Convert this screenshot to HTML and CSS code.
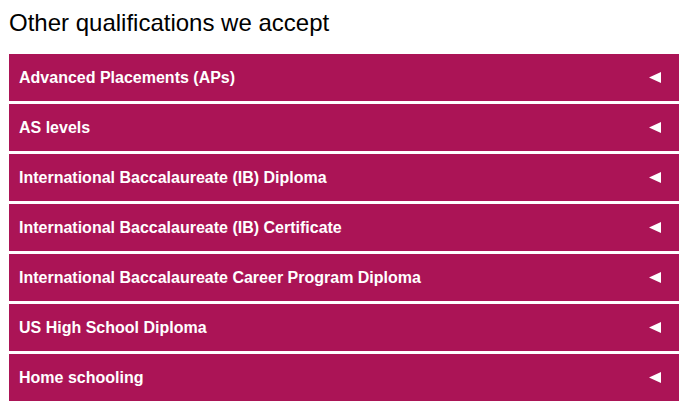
FILE: index.html
```html
<!DOCTYPE html>
<html lang="en">
<head>
<meta charset="utf-8">
<title>Other qualifications we accept</title>
<link rel="stylesheet" href="styles.css">
</head>
<body>
<main class="page">
  <h2 class="title">Other qualifications we accept</h2>
  <ul class="accordion">
    <li class="item"><span class="label">Advanced Placements (APs)</span><svg class="arrow" viewBox="0 0 12 11" width="12" height="11"><polygon points="0,5.5 12,0 12,11" fill="#fff"/></svg></li>
    <li class="item"><span class="label">AS levels</span><svg class="arrow" viewBox="0 0 12 11" width="12" height="11"><polygon points="0,5.5 12,0 12,11" fill="#fff"/></svg></li>
    <li class="item"><span class="label">International Baccalaureate (IB) Diploma</span><svg class="arrow" viewBox="0 0 12 11" width="12" height="11"><polygon points="0,5.5 12,0 12,11" fill="#fff"/></svg></li>
    <li class="item"><span class="label">International Baccalaureate (IB) Certificate</span><svg class="arrow" viewBox="0 0 12 11" width="12" height="11"><polygon points="0,5.5 12,0 12,11" fill="#fff"/></svg></li>
    <li class="item"><span class="label">International Baccalaureate Career Program Diploma</span><svg class="arrow" viewBox="0 0 12 11" width="12" height="11"><polygon points="0,5.5 12,0 12,11" fill="#fff"/></svg></li>
    <li class="item"><span class="label">US High School Diploma</span><svg class="arrow" viewBox="0 0 12 11" width="12" height="11"><polygon points="0,5.5 12,0 12,11" fill="#fff"/></svg></li>
    <li class="item"><span class="label">Home schooling</span><svg class="arrow" viewBox="0 0 12 11" width="12" height="11"><polygon points="0,5.5 12,0 12,11" fill="#fff"/></svg></li>
  </ul>
</main>
</body>
</html>
```
FILE: styles.css
```css
html, body {
  margin: 0;
  padding: 0;
  background: #ffffff;
}

body {
  font-family: "Liberation Sans", Arial, sans-serif;
}

.page {
  padding: 9px 9px 0 9px;
}

.title {
  margin: 0 0 17px 0;
  font-size: 24px;
  font-weight: normal;
  line-height: 28px;
  color: #000000;
}

.accordion {
  list-style: none;
  margin: 0;
  padding: 0;
  display: flex;
  flex-direction: column;
  gap: 3px;
}

.item {
  height: 47px;
  display: flex;
  align-items: center;
  justify-content: space-between;
  padding: 0 18px 0 10px;
  background: #ab1456;
  color: #ffffff;
}

.label {
  font-size: 16px;
  font-weight: bold;
  line-height: 18px;
}

.arrow {
  display: block;
  flex: none;
}
```
